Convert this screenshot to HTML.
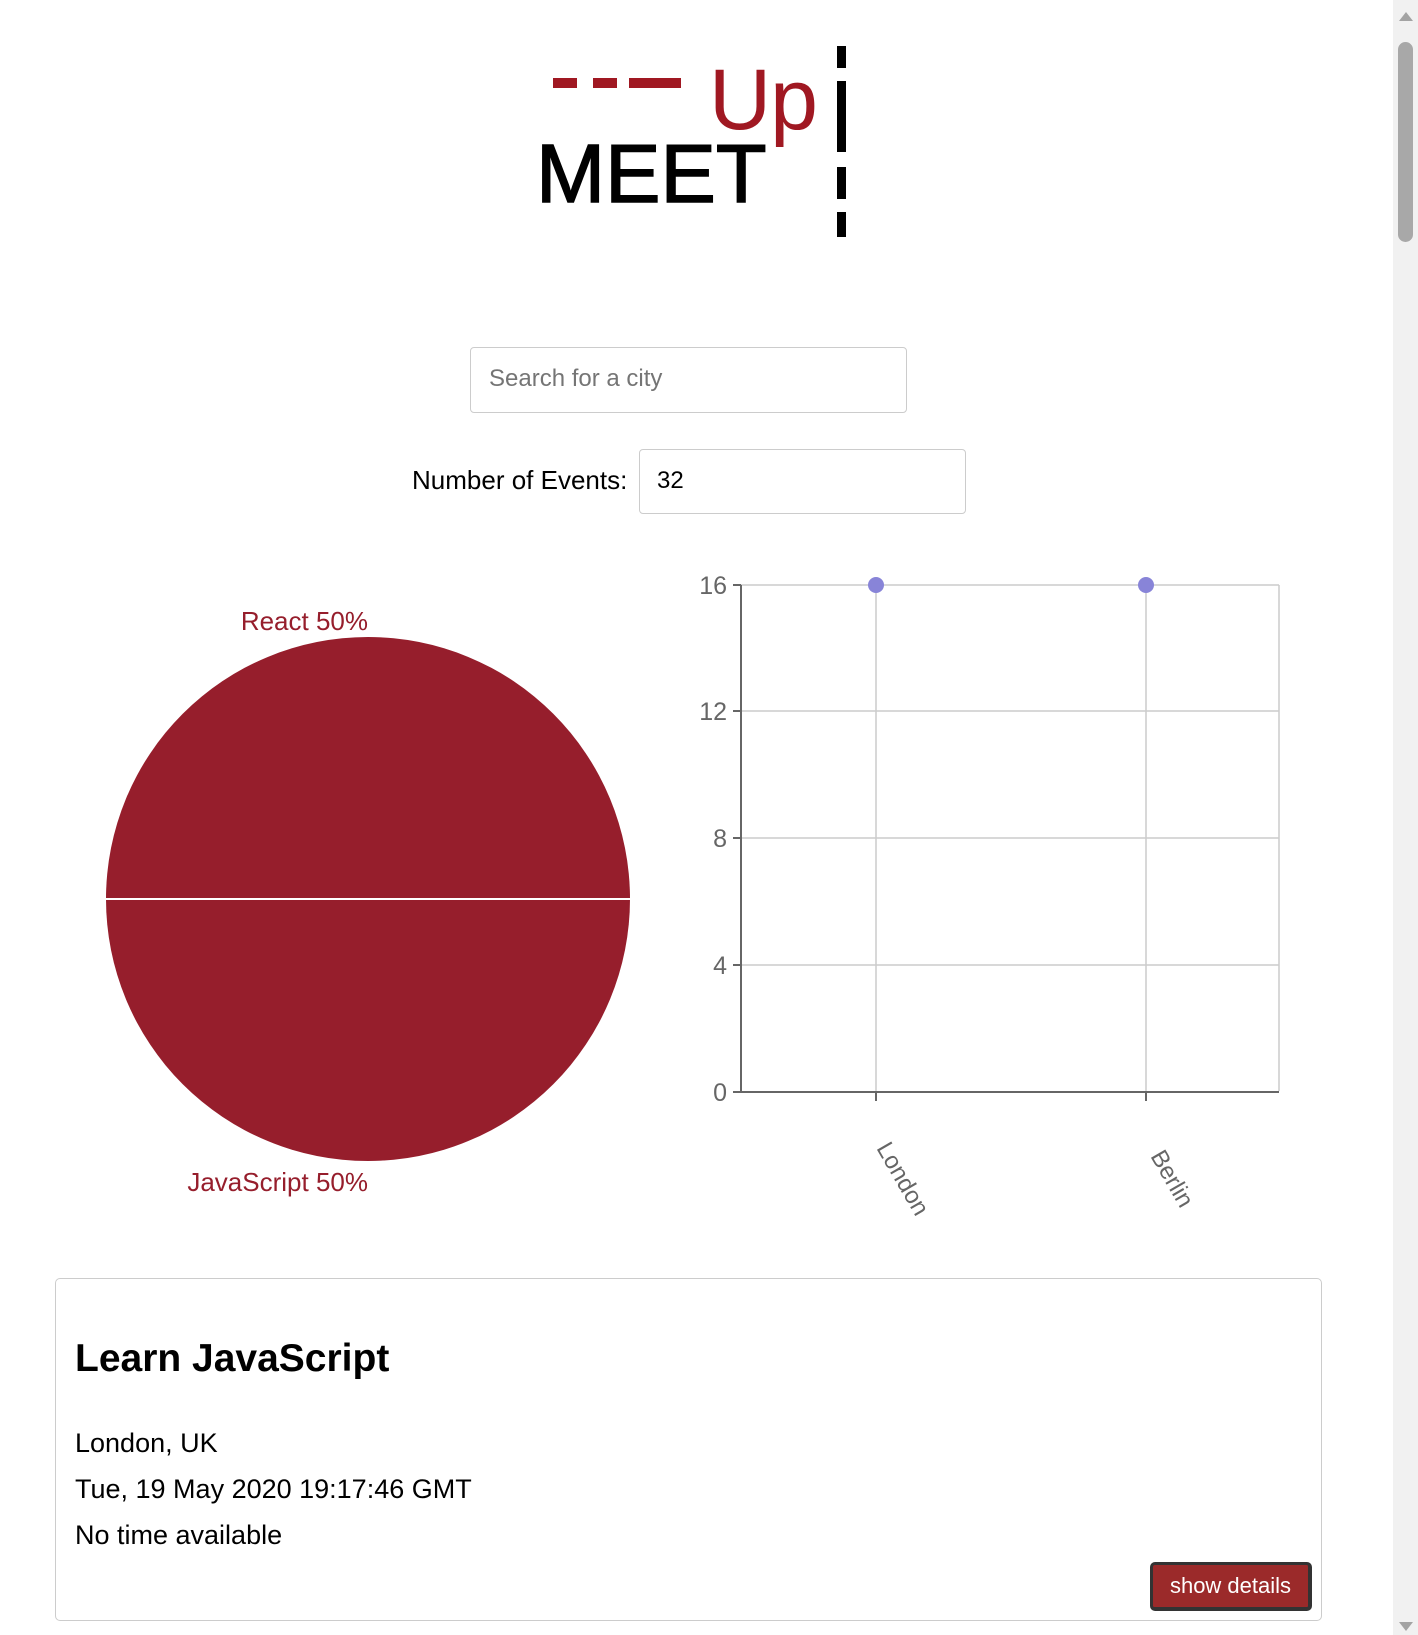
<!DOCTYPE html>
<html><head><meta charset="utf-8"><style>
html,body{margin:0;padding:0;background:#fff;}
body{width:1418px;height:1635px;position:relative;overflow:hidden;font-family:"Liberation Sans","DejaVu Sans",sans-serif;}
.a{position:absolute;white-space:nowrap;}
.inp{position:absolute;border:1px solid #ccc;border-radius:4px;background:#fff;box-sizing:border-box;}
</style></head><body>
<!-- logo -->
<div class="a" style="left:553px;top:78px;width:24px;height:10px;background:#a01822"></div>
<div class="a" style="left:593px;top:78px;width:24px;height:10px;background:#a01822"></div>
<div class="a" style="left:629px;top:78px;width:52px;height:10px;background:#a01822"></div>
<div class="a" style="left:709px;top:50px;font-size:86px;line-height:100px;color:#a01822;letter-spacing:-1px">Up</div>
<div class="a" style="left:536px;top:124px;font-size:83px;line-height:100px;color:#000;letter-spacing:0px;-webkit-text-stroke:1.5px #000">MEET</div>
<div class="a" style="left:837px;top:46px;width:9px;height:22px;background:#000"></div>
<div class="a" style="left:837px;top:81px;width:9px;height:71px;background:#000"></div>
<div class="a" style="left:837px;top:167px;width:9px;height:32px;background:#000"></div>
<div class="a" style="left:837px;top:212px;width:9px;height:25px;background:#000"></div>
<!-- search -->
<div class="inp" style="left:470px;top:347px;width:437px;height:66px;"></div>
<div class="a" style="left:489px;top:365px;font-size:24px;color:#757575">Search for a city</div>
<div class="a" style="left:412px;top:465px;font-size:26px;color:#000">Number of Events:</div>
<div class="inp" style="left:639px;top:449px;width:327px;height:65px;"></div>
<div class="a" style="left:657px;top:467px;font-size:24px;color:#000">32</div>
<!-- charts -->
<svg class="a" style="left:0;top:0" width="1418" height="1250">
<circle cx="368" cy="899" r="262" fill="#961e2c"/>
<line x1="106" y1="899" x2="630" y2="899" stroke="#fff" stroke-width="2"/>
<text x="368" y="630" text-anchor="end" font-size="26" fill="#961e2c" font-family="Liberation Sans,sans-serif">React 50%</text>
<text x="368" y="1191" text-anchor="end" font-size="26" fill="#961e2c" font-family="Liberation Sans,sans-serif">JavaScript 50%</text>
<g stroke="#ccc" stroke-width="1.5" fill="none">
<line x1="741" y1="585" x2="1279" y2="585"/><line x1="741" y1="711" x2="1279" y2="711"/>
<line x1="741" y1="838" x2="1279" y2="838"/><line x1="741" y1="965" x2="1279" y2="965"/>
<line x1="876" y1="585" x2="876" y2="1091"/><line x1="1146" y1="585" x2="1146" y2="1091"/>
<line x1="1279" y1="585" x2="1279" y2="1091"/>
</g>
<g stroke="#666" stroke-width="2" fill="none">
<line x1="741" y1="585" x2="741" y2="1092"/><line x1="741" y1="1092" x2="1279" y2="1092"/>
<line x1="733" y1="585" x2="741" y2="585"/><line x1="733" y1="711" x2="741" y2="711"/>
<line x1="733" y1="838" x2="741" y2="838"/><line x1="733" y1="965" x2="741" y2="965"/>
<line x1="733" y1="1092" x2="741" y2="1092"/>
<line x1="876" y1="1092" x2="876" y2="1101"/><line x1="1146" y1="1092" x2="1146" y2="1101"/>
</g>
<g font-size="25" fill="#666" text-anchor="end" font-family="Liberation Sans,sans-serif">
<text x="727" y="594">16</text><text x="727" y="720">12</text><text x="727" y="847">8</text>
<text x="727" y="974">4</text><text x="727" y="1101">0</text>
</g>
<text x="0" y="0" font-size="24" fill="#666" font-family="Liberation Sans,sans-serif" transform="translate(876,1148) rotate(60)">London</text>
<text x="0" y="0" font-size="24" fill="#666" font-family="Liberation Sans,sans-serif" transform="translate(1150,1156) rotate(60)">Berlin</text>
<circle cx="876" cy="585" r="8" fill="#8884d8"/><circle cx="1146" cy="585" r="8" fill="#8884d8"/>
</svg>
<!-- card -->
<div class="a" style="left:55px;top:1278px;width:1267px;height:343px;border:1px solid #ccc;border-radius:5px;box-sizing:border-box"></div>
<div class="a" style="left:75px;top:1337px;font-size:39px;font-weight:bold;color:#000">Learn JavaScript</div>
<div class="a" style="left:75px;top:1428px;font-size:27px;color:#000">London, UK</div>
<div class="a" style="left:75px;top:1474px;font-size:27px;color:#000">Tue, 19 May 2020 19:17:46 GMT</div>
<div class="a" style="left:75px;top:1520px;font-size:27px;color:#000">No time available</div>
<div class="a" style="left:1150px;top:1562px;width:162px;height:49px;background:#9b2a2a;border:3px solid #333;border-right-width:4px;border-bottom-width:4px;border-radius:5px;box-sizing:border-box;color:#fff;font-size:22px;text-align:center;line-height:41px">show details</div>
<!-- scrollbar -->
<div class="a" style="left:1393px;top:0;width:25px;height:1635px;background:#f1f1f1"></div>
<div class="a" style="left:1398px;top:42px;width:15px;height:200px;background:#a8a8a8;border-radius:8px"></div>
<div class="a" style="left:1399px;top:12px;width:0;height:0;border-left:7px solid transparent;border-right:7px solid transparent;border-bottom:9px solid #a3a3a3"></div>
<div class="a" style="left:1399px;top:1622px;width:0;height:0;border-left:7px solid transparent;border-right:7px solid transparent;border-top:9px solid #a3a3a3"></div>
</body></html>
